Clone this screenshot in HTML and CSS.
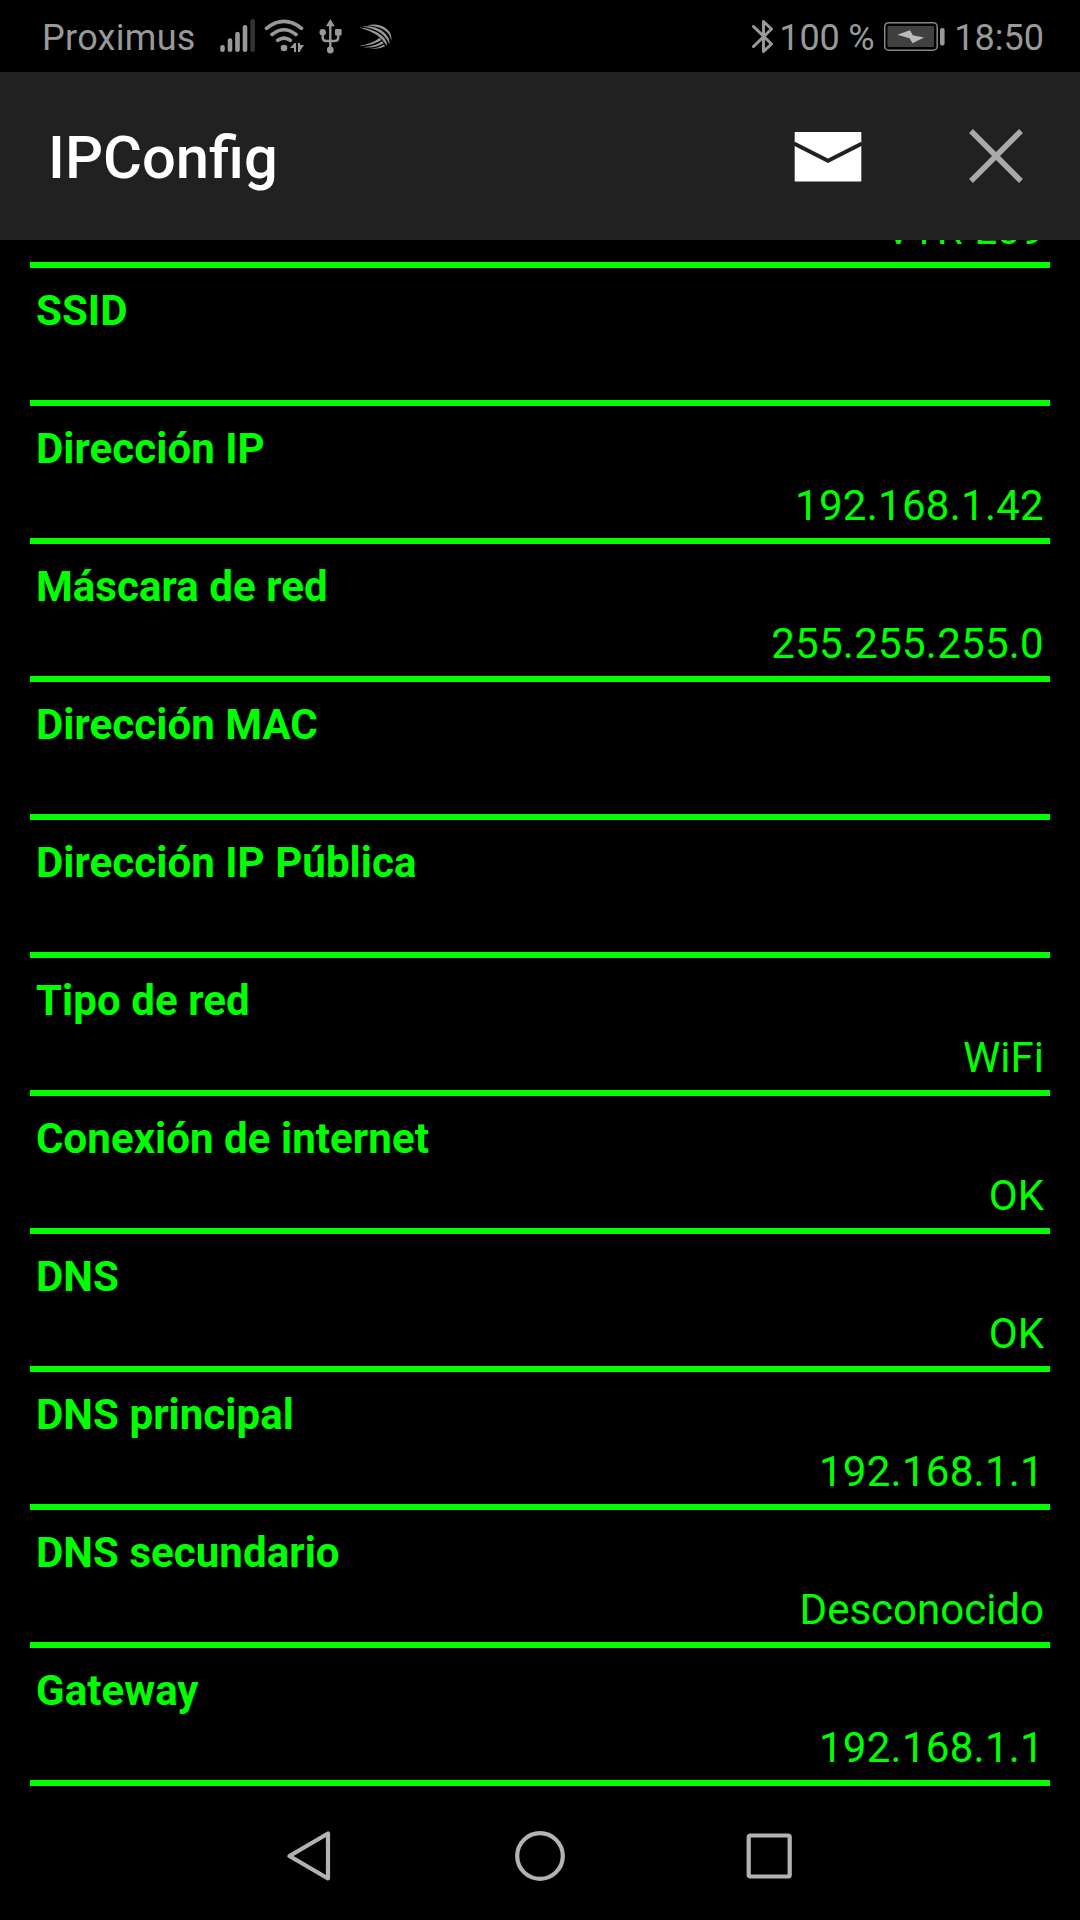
FILE: index.html
```html
<!DOCTYPE html>
<html lang="es">
<head>
    <meta charset="UTF-8">
    <title>IPConfig</title>
    <link rel="stylesheet" href="styles.css">
</head>
<body>
    <div class="status-bar">
        <span class="operador">Proximus</span>
        <svg class="icono-senal" width="36" height="36" viewBox="219 18 36 36">
            <path d="M222.5 47.3v2.5M230 40.5v9.3M237.5 34v15.8M245 27.3v22.5"/>
            <path class="apagada" d="M252.7 21.3v28.5"/>
        </svg>
        <svg class="icono-wifi" width="42" height="36" viewBox="263 18 42 36">
            <path class="ondas" d="M266.5 28.3Q284 14.5 301.5 28.3M272 34.5Q284 25 296 34.5M277.7 40.3Q284 35.8 290.3 40.3"/>
            <circle cx="284" cy="48" r="3.3"/>
            <path d="M290 48l4.5-5h1.5v9h-2v-4zM298 43h2v2h4l-4 6v1h-2z"/>
        </svg>
        <svg class="icono-usb" width="26" height="36" viewBox="318 18 26 36">
            <path class="ramas" d="M330.3 24v26M322.7 33v4.5q0 3.5 3.5 3.5h8.500q3.500 0 3.500-3.500v-4.500"/>
            <path d="M330.3 19l4.4 7.300h-8.800z"/>
            <circle cx="330.3" cy="50" r="3.4"/>
            <circle cx="322.7" cy="32.3" r="3.2"/>
            <rect x="335" y="29" width="6.6" height="6.6" rx="1"/>
        </svg>
        <svg class="icono-teclado" width="36" height="36" viewBox="357 18 36 36">
            <path d="M367 25.5Q378 22.5 385.5 28Q392 32.500 391.500 41Q389.500 32.500 382.500 29Q376 25.500 367 25.500z"/>
            <path d="M362 26.5Q375 25.5 383 31.5Q390 37 389.500 44.500Q386.500 37 380 32.500Q373 28 362 26.500z"/>
            <path d="M359 27.5Q373 28.5 381 35Q387.5 40 387 46Q383.500 40 377.500 35.500Q370 30.500 359 27.500z"/>
            <path d="M359 45.5Q371 44.5 379.5 38L381.5 40Q371 46.500 359 45.500z"/>
            <path d="M364 47.3Q375 46.5 382 41.3L383.7 43.3Q375 48.500 364 47.300z"/>
            <path d="M370 48.8Q378 48.5 384 44.5L385 46.3Q378 50 370 48.800z"/>
        </svg>
        <svg class="icono-bluetooth" width="22" height="36" viewBox="751 18 22 36">
            <path d="M753.5 26.5l18 17.5-8 7.500v-30l8 7.500-18 17.500"/>
        </svg>
        <span class="porcentaje">100 %</span>
        <svg class="icono-bateria" width="62" height="36" viewBox="884 18 62 36">
            <rect class="marco" x="884.7" y="22.7" width="52.5" height="27.5" rx="4"/>
            <rect class="carga" x="887.5" y="26" width="46.5" height="21" rx="1"/>
            <rect x="940" y="28" width="4.6" height="17.5" rx="2"/>
            <path class="rayo" d="M897.3 34.700L910 30.200L912.800 35.200L924 37.500L912.500 43.300L909.500 38.300z"/>
        </svg>
        <span class="hora">18:50</span>
    </div>

    <header class="cabecera">
        <h1>IPConfig</h1>
        <svg class="correo" width="68" height="50" viewBox="0 0 68 50">
            <rect x=".7" width="66.6" height="49.5"/>
            <path d="M0 11.5l34 17.3 34-17.3"/>
        </svg>
        <svg class="cerrar" width="54" height="54" viewBox="0 0 54 54">
            <path d="M2 2l50 50M52 2L2 52"/>
        </svg>
    </header>

    <main class="contenido">
        <dl class="lista">
            <div class="fila"><dt></dt><dd>VTR-L09</dd></div>
            <div class="fila"><dt>SSID</dt><dd></dd></div>
            <div class="fila"><dt>Dirección IP</dt><dd class="ip">192.168.1.42</dd></div>
            <div class="fila"><dt>Máscara de red</dt><dd class="ip">255.255.255.0</dd></div>
            <div class="fila"><dt>Dirección MAC</dt><dd></dd></div>
            <div class="fila"><dt>Dirección IP Pública</dt><dd></dd></div>
            <div class="fila"><dt>Tipo de red</dt><dd>WiFi</dd></div>
            <div class="fila"><dt>Conexión de internet</dt><dd>OK</dd></div>
            <div class="fila"><dt>DNS</dt><dd>OK</dd></div>
            <div class="fila"><dt>DNS principal</dt><dd class="ip">192.168.1.1</dd></div>
            <div class="fila"><dt>DNS secundario</dt><dd>Desconocido</dd></div>
            <div class="fila"><dt>Gateway</dt><dd class="ip">192.168.1.1</dd></div>
        </dl>
    </main>

    <nav class="navegacion">
        <svg width="50" height="50" viewBox="0 0 50 50"><path d="M43 2.5v45L4.500 25z"/></svg>
        <svg width="50" height="50" viewBox="0 0 50 50"><circle cx="25" cy="25" r="22.8"/></svg>
        <svg width="50" height="50" viewBox="0 0 50 50"><rect x="3.7" y="4.5" width="41" height="41" rx="1.5"/></svg>
    </nav>
</body>
</html>
```
FILE: styles.css
```css
* {
    box-sizing: border-box;
}
body {
    display: flex;
    flex-direction: column;
    height: 1920px;
    margin: 0;
    background-color: #000;
    font-family: Roboto, sans-serif;
    overflow: hidden;
}
svg {
    display: block;
    flex: none;
}

/* Barra de estado */
.status-bar {
    display: flex;
    align-items: center;
    height: 72px;
    padding: 0 36px 0 42px;
    color: #999;
    font-size: 36px;
    line-height: 42px;
    white-space: nowrap;
}
.status-bar span {
    padding-top: 4px;
}
.status-bar svg {
    fill: #999;
}
.operador {
    width: 177px;
    letter-spacing: 0.3px;
}
.icono-senal {
    stroke: #999;
    stroke-width: 4.6;
    stroke-linecap: round;
}
.icono-senal .apagada {
    stroke: #333;
}
.icono-wifi {
    margin-left: 8px;
}
.icono-wifi .ondas {
    fill: none;
    stroke: #999;
    stroke-width: 3.6;
    stroke-linecap: round;
}
.icono-usb {
    margin-left: 13px;
}
.icono-usb .ramas {
    fill: none;
    stroke: #999;
    stroke-width: 2.4;
}
.icono-teclado {
    margin-left: 13px;
}
.icono-bluetooth {
    margin-left: auto;
}
.status-bar .icono-bluetooth {
    fill: none;
    stroke: #999;
    stroke-width: 3;
    stroke-linecap: round;
    stroke-linejoin: round;
}
.porcentaje {
    width: 105px;
    margin-left: 6px;
    letter-spacing: -0.2px;
}
.icono-bateria .marco {
    fill: none;
    stroke: #888;
    stroke-width: 1.5;
}
.icono-bateria .carga {
    fill: #404040;
}
.icono-bateria .rayo {
    fill: #bbb;
}
.hora {
    margin-left: 8px;
}

/* Cabecera */
.cabecera {
    display: flex;
    align-items: center;
    height: 168px;
    padding: 0 57px 0 48px;
    background-color: #212121;
}
h1 {
    flex: 1;
    margin: 3px 0 0;
    color: #fff;
    font-size: 59.7px;
    font-weight: 500;
    line-height: 80px;
}
.correo {
    margin: 2px 107px 0 0;
    fill: #fff;
}
.correo path {
    fill: none;
    stroke: #212121;
    stroke-width: 4;
}
.cerrar {
    stroke: #aaa;
    stroke-width: 5.5;
}

/* Lista, desplazada bajo la cabecera */
.contenido {
    height: 1546px;
    overflow: hidden;
}
.lista {
    margin: -110px 30px 0;
    color: #0f0;
    font-size: 42px;
    line-height: 57px;
}
.fila {
    height: 138px;
    padding: 14px 6px 0;
    border-bottom: 6px solid #0f0;
}
dt {
    min-height: 57px;
    font-weight: bold;
    letter-spacing: 0.06px;
}
dd {
    margin: 0;
    text-align: right;
}
.ip {
    letter-spacing: 0.27px;
}

/* Botones de navegación */
.navegacion {
    display: flex;
    justify-content: center;
    gap: 180px;
    padding-top: 45px;
    fill: none;
    stroke: #b3b3b3;
    stroke-width: 4.2;
    stroke-linejoin: round;
}
```
